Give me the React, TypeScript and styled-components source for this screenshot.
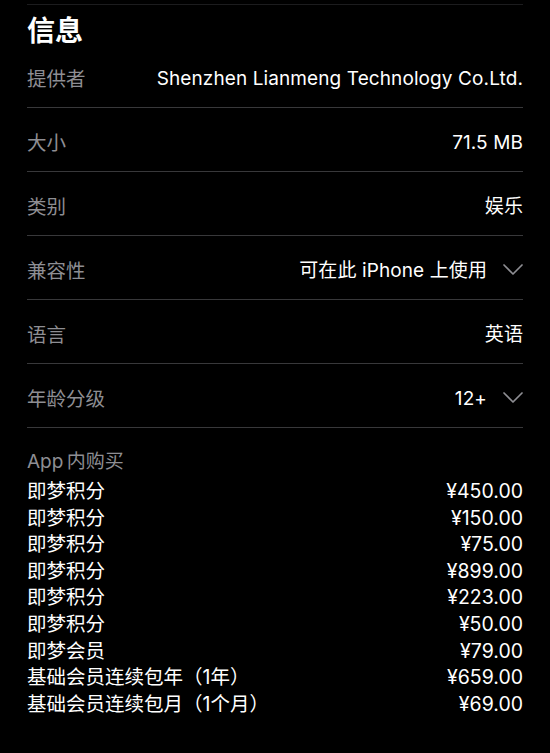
import React from "react";
import styled, { createGlobalStyle } from "styled-components";

const Global = createGlobalStyle`
  html, body { margin: 0; padding: 0; background: #000; }
  body {
    font-family: Inter, "Noto Sans CJK SC", sans-serif;
    -webkit-font-smoothing: antialiased;
  }
`;

const Page = styled.div`
  width: 550px;
  height: 753px;
  background: #000;
  box-sizing: border-box;
  padding: 4px 27px 0 27px;
  overflow: hidden;
  color: #fff;
  font-family: Inter, "Noto Sans CJK SC", sans-serif;
`;

const TopRule = styled.div`
  height: 1px;
  background: #1c1c1e;
`;

const Title = styled.h2`
  margin: 7px 0 0 0;
  font-size: 28px;
  line-height: 34px;
  font-weight: 700;
  color: #fff;
  font-family: "Noto Sans CJK SC", sans-serif;
`;

const Rows = styled.div`
  margin-top: -2px;
`;

const Row = styled.div`
  height: 64px;
  box-sizing: border-box;
  padding-top: 6px;
  display: flex;
  align-items: center;
  justify-content: space-between;
  border-bottom: 1px solid #38383a;
`;

const Label = styled.span`
  color: #8e8e93;
  font-size: 19.5px;
  line-height: 24px;
`;

const Value = styled.span`
  color: #fff;
  display: flex;
  align-items: center;
  gap: 16px;
  font-size: 19px;
  line-height: 24px;
  letter-spacing: 0.1px;
`;

const ChevronBox = styled.span`
  display: flex;
  margin-top: -2px;
`;

const Chevron = () => (
  <ChevronBox>
    <svg width="20" height="11" viewBox="0 0 20 11" fill="none">
      <path d="M1 1 L10 10 L19 1" stroke="#8e8e93" strokeWidth="1.7" strokeLinecap="round" strokeLinejoin="round" />
    </svg>
  </ChevronBox>
);

const IapSection = styled.div`
  padding-top: 20px;
`;

const IapHeader = styled.div`
  color: #8e8e93;
  font-size: 19px;
  line-height: 27px;
  word-spacing: -2px;
`;

const IapList = styled.div`
  margin-top: 3px;
  display: flex;
  flex-direction: column;
`;

const IapItem = styled.div`
  display: flex;
  justify-content: space-between;
  font-size: 19.5px;
  line-height: 26.6px;
  color: #fff;
`;

const rows: { label: string; value: string; chevron?: boolean }[] = [
  { label: "提供者", value: "Shenzhen Lianmeng Technology Co.Ltd." },
  { label: "大小", value: "71.5 MB" },
  { label: "类别", value: "娱乐" },
  { label: "兼容性", value: "可在此 iPhone 上使用", chevron: true },
  { label: "语言", value: "英语" },
  { label: "年龄分级", value: "12+", chevron: true },
];

const iaps: [string, string][] = [
  ["即梦积分", "¥450.00"],
  ["即梦积分", "¥150.00"],
  ["即梦积分", "¥75.00"],
  ["即梦积分", "¥899.00"],
  ["即梦积分", "¥223.00"],
  ["即梦积分", "¥50.00"],
  ["即梦会员", "¥79.00"],
  ["基础会员连续包年（1年）", "¥659.00"],
  ["基础会员连续包月（1个月）", "¥69.00"],
];

export default function App() {
  return (
    <>
      <Global />
      <Page>
        <TopRule />
        <Title>信息</Title>
        <Rows>
          {rows.map((r) => (
            <Row key={r.label}>
              <Label>{r.label}</Label>
              <Value>
                {r.value}
                {r.chevron && <Chevron />}
              </Value>
            </Row>
          ))}
        </Rows>
        <IapSection>
          <IapHeader>App 内购买</IapHeader>
          <IapList>
            {iaps.map(([n, p], i) => (
              <IapItem key={i}>
                <span>{n}</span>
                <span>{p}</span>
              </IapItem>
            ))}
          </IapList>
        </IapSection>
      </Page>
    </>
  );
}
